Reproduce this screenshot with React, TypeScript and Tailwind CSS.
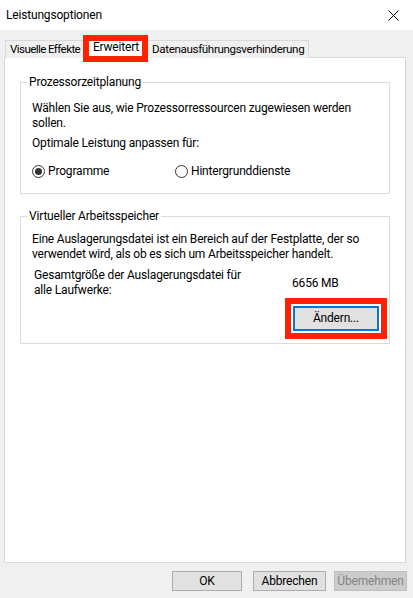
import React from "react";

function Radio({ checked, label }: { checked?: boolean; label: string }) {
  return (
    <div className="flex items-center gap-[3px]">
      <span className="flex h-[13px] w-[13px] items-center justify-center rounded-full border border-[#333333] bg-white">
        {checked && <span className="h-[7px] w-[7px] rounded-full bg-[#333333]" />}
      </span>
      <span>{label}</span>
    </div>
  );
}

function Btn({
  children,
  className = "",
  disabled,
}: {
  children: React.ReactNode;
  className?: string;
  disabled?: boolean;
}) {
  return (
    <div
      className={`flex h-[20px] items-center justify-center border ${
        disabled
          ? "border-[#bfbfbf] bg-[#cccccc] text-[#838383]"
          : "border-[#adadad] bg-[#e1e1e1] text-black"
      } ${className}`}
    >
      {children}
    </div>
  );
}

export default function App() {
  return (
    <div
      className="flex h-[598px] w-[413px] flex-col whitespace-nowrap bg-[#f0f0f0] text-[12px] leading-[15px] tracking-[-0.18px] text-black"
      style={{ fontFamily: 'Roboto, "Liberation Sans", sans-serif' }}
    >
      {/* Title bar */}
      <div className="flex h-[30px] items-center justify-between bg-white pl-[6px] pr-[14px]">
        <span className="text-[12px]">Leistungsoptionen</span>
        <svg width="11" height="11" viewBox="0 0 11 11" className="block">
          <path d="M0.5 0.5L10.5 10.5M10.5 0.5L0.5 10.5" stroke="#000" strokeWidth="1" />
        </svg>
      </div>

      <div className="flex flex-col px-[4px] pt-[6px]">
        {/* Tabs */}
        <div className="relative z-10 flex h-[22px] items-end pl-[1px] text-[11.6px] tracking-[-0.35px]">
          <div className="flex h-[18px] w-[81px] items-center overflow-hidden border border-b-0 border-[#d9d9d9] bg-[#f0f0f0] pl-[4px] tracking-[-0.6px]">
            Visuelle Effekte
          </div>
          <div className="relative z-20 flex h-[22px] w-[60px] items-start justify-center bg-white pt-[4px] text-[12px] tracking-[-0.2px]">
            Erweitert
            <span className="absolute left-[-3px] right-[-2px] top-[-1px] bottom-[-4px] border-[6px] border-[#ff2200]" />
          </div>
          <div className="flex h-[18px] w-[163px] items-center overflow-hidden border border-b-0 border-[#d9d9d9] bg-[#f0f0f0] pl-[5px]">
            Datenausführungsverhinderung
          </div>
        </div>

        {/* Tab page */}
        <div className="-mt-[1px] flex h-[506px] w-[402px] flex-col border border-[#d9d9d9] bg-white px-[15px] pt-[17px]">
          <fieldset className="h-[119px] border border-[#dcdcdc] p-0">
            <legend className="ml-[6px] px-[2px]">Prozessorzeitplanung</legend>
            <div className="px-[11px] pt-[11px]">
              <p>
                Wählen Sie aus, wie Prozessorressourcen zugewiesen werden
                <br />
                sollen.
              </p>
              <p className="mt-[5px]">Optimale Leistung anpassen für:</p>
              <div className="mt-[13px] flex">
                <div className="w-[143px]">
                  <Radio checked label="Programme" />
                </div>
                <Radio label="Hintergrunddienste" />
              </div>
            </div>
          </fieldset>

          <fieldset className="mt-[15px] h-[135px] border border-[#dcdcdc] p-0">
            <legend className="ml-[6px] px-[2px]">Virtueller Arbeitsspeicher</legend>
            <div className="px-[11px] pt-[8px]">
              <p>
                Eine Auslagerungsdatei ist ein Bereich auf der Festplatte, der so
                <br />
                verwendet wird, als ob es sich um Arbeitsspeicher handelt.
              </p>
              <div className="mt-[6px] flex items-center pl-[2px]">
                <p className="w-[258px]">
                  Gesamtgröße der Auslagerungsdatei für
                  <br />
                  alle Laufwerke:
                </p>
                <span>6656 MB</span>
              </div>
            </div>
            <div className="flex justify-end pr-[2px]">
              <div className="border-[6px] border-[#ff2200] p-[2px]">
                <div className="flex h-[25px] w-[86px] items-center justify-center border-[2px] border-[#0078d7] bg-[#e1e1e1]">
                  Ändern...
                </div>
              </div>
            </div>
          </fieldset>
        </div>

        {/* Bottom buttons */}
        <div className="mt-[8px] flex justify-end pr-[2px]">
          <Btn className="w-[70px]">OK</Btn>
          <Btn className="ml-[11px] w-[73px]">Abbrechen</Btn>
          <Btn disabled className="ml-[8px] w-[73px]">
            Übernehmen
          </Btn>
        </div>
      </div>
    </div>
  );
}
